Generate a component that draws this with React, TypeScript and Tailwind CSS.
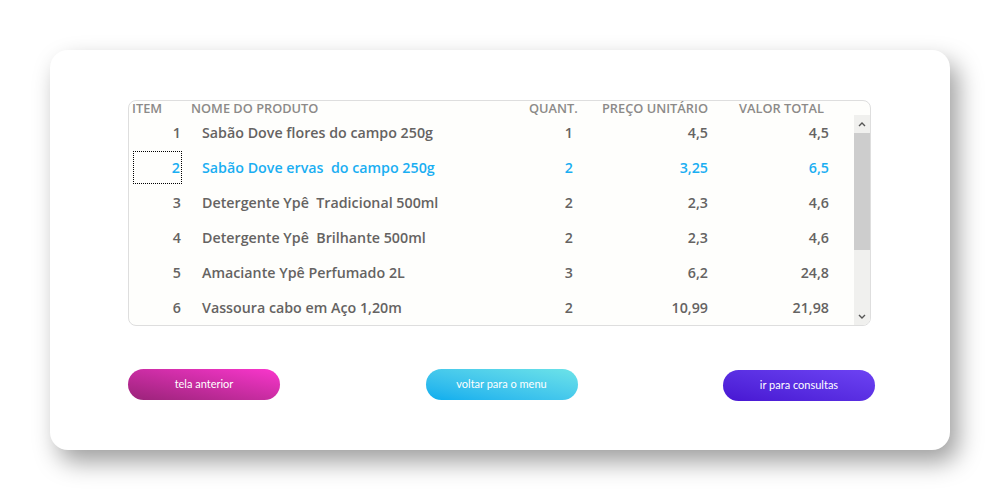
import React from 'react';

type Row = { item: number; name: string; qty: string; price: string; total: string };

const ROWS: Row[] = [
  { item: 1, name: 'Sabão Dove flores do campo 250g', qty: '1', price: '4,5', total: '4,5' },
  { item: 2, name: 'Sabão Dove ervas\u00a0 do campo 250g', qty: '2', price: '3,25', total: '6,5' },
  { item: 3, name: 'Detergente Ypê\u00a0 Tradicional 500ml', qty: '2', price: '2,3', total: '4,6' },
  { item: 4, name: 'Detergente Ypê\u00a0 Brilhante 500ml', qty: '2', price: '2,3', total: '4,6' },
  { item: 5, name: 'Amaciante Ypê Perfumado 2L', qty: '3', price: '6,2', total: '24,8' },
  { item: 6, name: 'Vassoura cabo em Aço 1,20m', qty: '2', price: '10,99', total: '21,98' },
];

const SELECTED = 2;

// ── Scrollbar ─────────────────────────────────────────────────────────────

function Scrollbar() {
  return (
    <div className="w-[16px] flex flex-col bg-[#f0f0ee] rounded-br-[7px]">
      <div className="h-[18px] flex items-center justify-center">
        <svg width="8" height="6" viewBox="0 0 8 6">
          <path d="M1 5 L4 2 L7 5" fill="none" stroke="#555" strokeWidth="1.4" />
        </svg>
      </div>
      <div className="h-[117px] bg-[#cdcdcd]" />
      <div className="flex-1" />
      <div className="h-[16px] flex items-center justify-center">
        <svg width="8" height="6" viewBox="0 0 8 6">
          <path d="M1 1 L4 4 L7 1" fill="none" stroke="#555" strokeWidth="1.4" />
        </svg>
      </div>
    </div>
  );
}

// ── Button ────────────────────────────────────────────────────────────────

function PillButton({ label, className }: { label: string; className: string }) {
  return (
    <button
      type="button"
      className={`w-[152px] h-[31px] rounded-full text-white text-[11px] ${className}`}
      style={{ fontFamily: 'Lato, "Open Sans", sans-serif' }}
    >
      {label}
    </button>
  );
}

// ── App ───────────────────────────────────────────────────────────────────

export default function App() {
  return (
    <div
      className="w-[1000px] h-[500px] bg-white pt-[50px] pl-[50px]"
      style={{ fontFamily: '"Open Sans", sans-serif' }}
    >
      <div className="w-[900px] h-[400px] bg-white rounded-[18px] shadow-[8px_12px_24px_rgba(0,0,0,0.38)] pt-[50px] pl-[78px]">
        {/* Table */}
        <div className="w-[743px] h-[226px] rounded-[8px] border border-[#dedede] bg-[#fefefc] flex flex-col">
          {/* Header */}
          <div className="h-[14px] flex items-center text-[12.8px] font-semibold text-[#8c8a88] leading-[14px] uppercase whitespace-nowrap">
            <div className="w-[62px] pl-[3px]">Item</div>
            <div className="w-[338px]">Nome do produto</div>
            <div className="w-[73px]">Quant.</div>
            <div className="w-[137px]">Preço unitário</div>
            <div>Valor total</div>
          </div>

          <div className="flex-1 flex">
            <div className="flex-1 flex flex-col">
              {ROWS.map(r => {
                const sel = r.item === SELECTED;
                return (
                  <div
                    key={r.item}
                    className={`h-[35px] flex items-center text-[14.25px] font-semibold ${
                      sel ? 'text-[#1aaef2]' : 'text-[#656362]'
                    }`}
                  >
                    <div className="w-[53px] h-full pl-[4px] py-px">
                      <div
                        className={`h-full flex items-center justify-end pr-px ${
                          sel ? 'border border-dotted border-black' : ''
                        }`}
                      >
                        {r.item}
                      </div>
                    </div>
                    <div className="w-[347px] pl-[20px] whitespace-nowrap">{r.name}</div>
                    <div className="w-[44px] text-right">{r.qty}</div>
                    <div className="w-[135px] text-right">{r.price}</div>
                    <div className="w-[121px] text-right">{r.total}</div>
                  </div>
                );
              })}
            </div>
            <Scrollbar />
          </div>
        </div>

        {/* Buttons */}
        <div className="w-[747px] mt-[43px] flex justify-between">
          <PillButton label="tela anterior" className="bg-linear-to-tr from-[#9a2379] to-[#fa36cd]" />
          <PillButton label="voltar para o menu" className="bg-linear-to-tr from-[#04adee] to-[#6ce3e8]" />
          <PillButton label="ir para consultas" className="bg-linear-to-tr from-[#4815d2] to-[#6d42f3] mt-px" />
        </div>
      </div>
    </div>
  );
}
